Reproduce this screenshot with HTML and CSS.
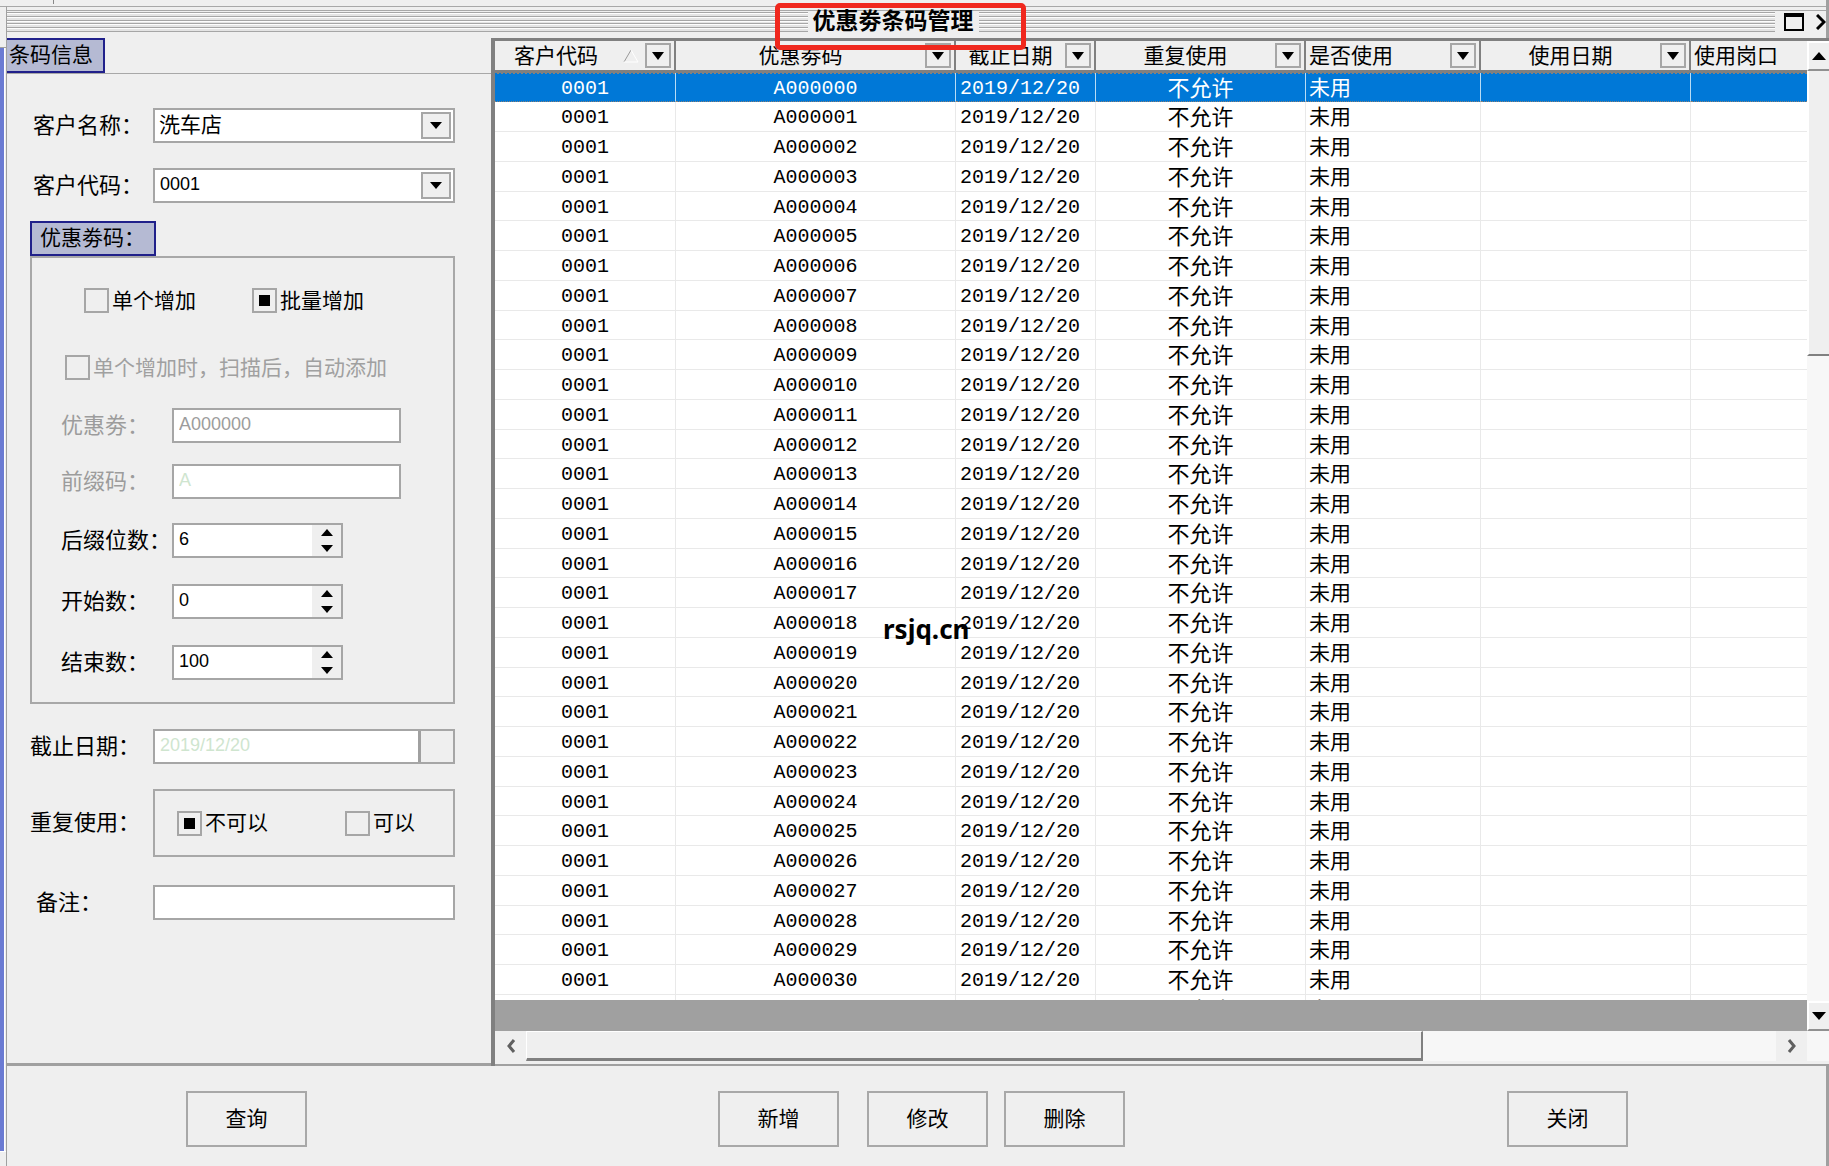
FILE: index.html
```html
<!DOCTYPE html>
<html lang="zh-CN">
<head>
<meta charset="utf-8">
<title>优惠劵条码管理</title>
<link rel="stylesheet" href="styles.css">
</head>
<body>
<div class="topstrip"></div>
<div class="desktop">
  <div class="rail"><div class="rail-head"></div><div class="rail-bar"></div><div class="rail-foot"></div></div>
  <div class="window">
    <header class="titlebar">
      <div class="stripes"><h1 class="title">优惠劵条码管理</h1></div>
      <div class="window-buttons">
        <button type="button" aria-label="最大化"><svg width="20" height="18" viewBox="0 0 20 18"><rect x="1" y="1" width="18" height="16" fill="none" stroke="#000" stroke-width="2"/><path d="M0 2h20" stroke="#000" stroke-width="4"/></svg></button>
        <button type="button" aria-label="关闭窗口"><svg width="10" height="16" viewBox="0 0 10 16"><path d="M1 1l7 7-7 7" fill="none" stroke="#000" stroke-width="3"/></svg></button>
      </div>
    </header>

    <main class="content">
      <form class="panel" id="form">
        <h2 class="tab tab-main">条码信息</h2>
        <div class="panel-body">
          <div class="row row-first">
            <label class="label inset" for="name">客户名称：</label>
            <div class="combo"><select id="name" class="cjk"><option>洗车店</option></select><span class="drop"><svg width="12" height="7" viewBox="0 0 12 7"><path d="M0 0h12L6 7z"/></svg></span></div>
          </div>
          <div class="row">
            <label class="label inset" for="code">客户代码：</label>
            <div class="combo"><select id="code"><option>0001</option></select><span class="drop"><svg width="12" height="7" viewBox="0 0 12 7"><path d="M0 0h12L6 7z"/></svg></span></div>
          </div>

          <h2 class="tab tab-group">优惠劵码：</h2>
          <div class="group">
            <div class="choices">
              <label class="choice"><input type="radio" name="mode">单个增加</label>
              <label class="choice"><input type="radio" name="mode" checked>批量增加</label>
            </div>
            <label class="choice auto-add"><input type="checkbox" disabled>单个增加时，扫描后，自动添加</label>
            <div class="field field-text"><label class="label dim" for="coupon">优惠劵：</label><input class="text dim" id="coupon" value="A000000" disabled></div>
            <div class="field field-text"><label class="label dim" for="prefix">前缀码：</label><input class="text pale" id="prefix" value="A" disabled></div>
            <div class="field"><label class="label" for="digits">后缀位数：</label><div class="spin"><input id="digits" value="6" inputmode="numeric"><span class="steps"><button type="button" aria-label="增加"><svg width="12" height="7" viewBox="0 0 12 7"><path d="M0 7h12L6 0z"/></svg></button><button type="button" aria-label="减少"><svg width="12" height="7" viewBox="0 0 12 7"><path d="M0 0h12L6 7z"/></svg></button></span></div></div>
            <div class="field"><label class="label" for="start">开始数：</label><div class="spin"><input id="start" value="0" inputmode="numeric"><span class="steps"><button type="button" aria-label="增加"><svg width="12" height="7" viewBox="0 0 12 7"><path d="M0 7h12L6 0z"/></svg></button><button type="button" aria-label="减少"><svg width="12" height="7" viewBox="0 0 12 7"><path d="M0 0h12L6 7z"/></svg></button></span></div></div>
            <div class="field"><label class="label" for="end">结束数：</label><div class="spin"><input id="end" value="100" inputmode="numeric"><span class="steps"><button type="button" aria-label="增加"><svg width="12" height="7" viewBox="0 0 12 7"><path d="M0 7h12L6 0z"/></svg></button><button type="button" aria-label="减少"><svg width="12" height="7" viewBox="0 0 12 7"><path d="M0 0h12L6 7z"/></svg></button></span></div></div>
          </div>

          <div class="row">
            <label class="label" for="due">截止日期：</label>
            <div class="date"><input id="due" value="2019/12/20" disabled><button type="button" aria-label="选择日期" disabled></button></div>
          </div>
          <div class="row">
            <span class="label" id="reuse">重复使用：</span>
            <div class="reuse" role="radiogroup" aria-labelledby="reuse">
              <label class="choice"><input type="radio" name="reuse" checked>不可以</label>
              <label class="choice"><input type="radio" name="reuse">可以</label>
            </div>
          </div>
          <div class="row row-note">
            <label class="label note" for="note">备注：</label>
            <input class="text" id="note">
          </div>
        </div>
      </form>

      <section class="grid">
        <div class="grid-main">
          <div class="viewport">
            <table>
              <colgroup><col class="c-client"><col class="c-coupon"><col class="c-due"><col class="c-reuse"><col class="c-state"><col class="c-used"><col></colgroup>
              <thead><tr>
                <th><div class="head"><span>客户代码</span><svg class="sort" width="16" height="14" viewBox="0 0 16 14"><path d="M1 13L8 1" stroke="#999" stroke-width="1" fill="none"/><path d="M8 1l7 12H1" stroke="#fff" stroke-width="1" fill="none"/></svg><button type="button" aria-label="筛选"><svg width="12" height="8" viewBox="0 0 12 8"><path d="M0 0h12L6 8z"/></svg></button></div></th>
                <th><div class="head"><span>优惠劵码</span><button type="button" aria-label="筛选"><svg width="12" height="8" viewBox="0 0 12 8"><path d="M0 0h12L6 8z"/></svg></button></div></th>
                <th><div class="head"><span>截止日期</span><button type="button" aria-label="筛选"><svg width="12" height="8" viewBox="0 0 12 8"><path d="M0 0h12L6 8z"/></svg></button></div></th>
                <th><div class="head"><span>重复使用</span><button type="button" aria-label="筛选"><svg width="12" height="8" viewBox="0 0 12 8"><path d="M0 0h12L6 8z"/></svg></button></div></th>
                <th><div class="head start"><span>是否使用</span><button type="button" aria-label="筛选"><svg width="12" height="8" viewBox="0 0 12 8"><path d="M0 0h12L6 8z"/></svg></button></div></th>
                <th><div class="head"><span>使用日期</span><button type="button" aria-label="筛选"><svg width="12" height="8" viewBox="0 0 12 8"><path d="M0 0h12L6 8z"/></svg></button></div></th>
                <th><div class="head start"><span>使用岗口</span></div></th>
              </tr></thead>
              <tbody id="rows"></tbody>
            </table>
          </div>
          <div class="filler"></div>
        </div>
        <div class="vscroll">
          <button type="button" aria-label="向上滚动"><svg width="14" height="8" viewBox="0 0 14 8"><path d="M0 8h14L7 0z"/></svg></button>
          <div class="vthumb"></div>
          <button class="down" type="button" aria-label="向下滚动"><svg width="14" height="8" viewBox="0 0 14 8"><path d="M0 0h14L7 8z"/></svg></button>
        </div>
        <div class="hscroll">
          <button type="button" aria-label="向左滚动"><svg width="10" height="14" viewBox="0 0 10 14"><path d="M8 1L3 7l5 6" fill="none" stroke="#606060" stroke-width="3"/></svg></button>
          <div class="hthumb"></div>
          <button class="right" type="button" aria-label="向右滚动"><svg width="10" height="14" viewBox="0 0 10 14"><path d="M2 1l5 6-5 6" fill="none" stroke="#606060" stroke-width="3"/></svg></button>
        </div>
      </section>
    </main>

    <footer class="actions">
      <button type="button">查询</button>
      <div class="edit">
        <button type="button">新增</button>
        <button type="button">修改</button>
        <button type="button">删除</button>
      </div>
      <button class="close" type="button">关闭</button>
    </footer>
  </div>
</div>
<div class="watermark">rsjq.cn</div>
<script src="app.js"></script>
</body>
</html>
```

FILE: styles.css
```css
* { box-sizing: border-box; }

body {
  margin: 0;
  height: 100vh;
  overflow: hidden;
  display: flex;
  flex-direction: column;
  background: #efefef;
  color: #000;
  font: 21px/24px "Liberation Sans", "Noto Sans CJK SC", sans-serif;
}

h1, h2 { margin: 0; font-size: 21px; font-weight: 400; white-space: nowrap; }
button, input, select { font: inherit; color: inherit; margin: 0; border-radius: 0; }
button { padding: 0; border: 0; background: #efefef; display: grid; place-items: center; }
svg { display: block; }

.topstrip {
  flex: 0 0 6px;
  border-right: 3px solid #a0a0a0;
  background: linear-gradient(#888, #888) 53px 0 / 1px 4px no-repeat;
}

.desktop { flex: 1; min-height: 0; display: flex; }

/* Edge of the parent window on the far left */
.rail { flex: 0 0 7px; display: flex; flex-direction: column; border-top: 1px solid #a8a8a8; border-right: 1px solid #a0a0a0; }
.rail-head { height: 41px; border-bottom: 1px solid #a0a0a0; }
.rail-bar { flex: 1; border-right: 1px solid #efefef; background: linear-gradient(90deg, #6b7bd3 4px, #fff 4px); }
.rail-foot { height: 15px; border-top: 1px solid #fff; }

.window { flex: 1; min-width: 0; display: flex; flex-direction: column; }

.titlebar {
  flex: 0 0 32px;
  display: flex;
  border-right: 3px solid #a0a0a0;
  background:
    linear-gradient(#a8a8a8, #a8a8a8) 0 0 / 100% 1px no-repeat,
    linear-gradient(#a8a8a8, #a8a8a8) 0 4px / 100% 1px no-repeat;
}
.stripes {
  flex: 1;
  display: flex;
  justify-content: center;
  align-items: flex-start;
  padding: 5px 0 0 4px;
  background:
    linear-gradient(
      #a6a6a6 1px, #fdfdfd 1px 2px, #e4e4e4 2px 4px,
      #a6a6a6 4px 5px, #fdfdfd 5px 6px, #e4e4e4 6px 8px,
      #a6a6a6 8px 9px, #fdfdfd 9px 10px, #e4e4e4 10px 11px,
      #a6a6a6 11px 12px, #fdfdfd 12px 13px, #e4e4e4 13px 15px,
      #a6a6a6 15px 16px, #fdfdfd 16px 17px, #e4e4e4 17px 19px,
      #a6a6a6 19px 20px) 0 6px / 100% 20px no-repeat;
}
.title {
  position: relative;
  height: 22px;
  padding: 0 5px;
  background: #efefef;
  font-size: 23px;
  line-height: 20px;
  font-weight: 700;
}
.title::after {
  content: "";
  position: absolute;
  z-index: 2;
  inset: -8px -47px -17px -33px;
  border: 5px solid #f0281e;
  border-radius: 5px;
}
.window-buttons { flex: 0 0 51px; display: flex; align-items: center; justify-content: flex-end; gap: 12px; }
.window-buttons button { background: none; }

.content { flex: 1; min-height: 0; display: flex; }

.panel { flex: 0 0 484px; display: flex; flex-direction: column; align-items: flex-start; border-bottom: 3px solid #a0a0a0; }
.tab { border: 2px solid #20208a; background: #b5bad3; line-height: 30px; height: 35px; }
.tab-main { width: 98px; padding-left: 2px; border-left: 0; }
.tab-group { width: 126px; padding-left: 8px; margin-top: -7px; }
.panel-body {
  align-self: stretch;
  flex: 1;
  display: flex;
  flex-direction: column;
  gap: 25px;
  padding: 34px 36px 0 23px;
  border-top: 1px solid #a8a8a8;
}
.row { display: grid; grid-template-columns: 123px 1fr; align-items: center; }
.label { font-size: 22px; white-space: nowrap; }
.inset { padding-left: 3px; }
.note { padding-left: 6px; }
.dim { color: #9c9c9c; }

.combo, .spin, .date, .text { height: 35px; border: 2px solid #a6a6a6; background: #fff; }
.combo, .spin, .date { display: flex; }
.combo select, .spin input, .date input {
  flex: 1;
  min-width: 0;
  appearance: none;
  border: 0;
  padding: 0 5px 3px;
  background: none;
  font-size: 18px;
  outline: 0;
}
.combo .cjk { font-size: 21px; padding: 0 4px 2px; }
.drop { width: 30px; margin: 2px; border: 2px solid #a6a6a6; background: #efefef; display: grid; place-items: center; }
.text { width: 100%; padding: 0 5px 3px; font-size: 18px; outline: 0; }
.text.pale, .date input { color: #cfe5cf; }

.group { display: flex; flex-direction: column; margin-top: -25px; height: 448px; border: 2px solid #a8a8a8; padding: 30px 0 0 29px; }
.choices { display: grid; grid-template-columns: 168px 1fr; padding-left: 23px; }
.choice { display: flex; align-items: center; gap: 3px; white-space: nowrap; }
.choice input { appearance: none; width: 25px; height: 25px; border: 2px solid #a6a6a6; background: #efefef; }
.choice input:checked { background: linear-gradient(#000, #000) center / 11px 11px no-repeat #efefef; }
.auto-add { margin: 42px 0 28px 4px; color: #a0a0a0; }
.field { display: grid; grid-template-columns: 111px 171px; align-items: center; margin-bottom: 26px; }
.field-text { grid-template-columns: 111px 229px; margin-bottom: 21px; }
.field-text + .field:not(.field-text) { margin-top: 3px; }
.spin input { padding-right: 0; }
.steps { width: 29px; background: #efefef; display: grid; grid-template-rows: 1fr 1fr; justify-items: center; }

.date input { border-right: 3px solid #a0a0a0; }
.date button { width: 32px; }
.reuse { display: grid; grid-template-columns: 168px 1fr; align-items: center; height: 68px; padding-left: 22px; border: 2px solid #a8a8a8; }
.row-note { margin-top: 3px; }

.grid {
  flex: 1;
  min-width: 0;
  display: grid;
  grid-template-columns: 1fr 22px;
  grid-template-rows: 1fr 35px;
  border-top: 3px solid #808080;
  border-left: 4px solid #808080;
}
.grid-main { min-width: 0; min-height: 0; display: flex; flex-direction: column; }
.viewport { flex: 1; min-height: 0; overflow: hidden; background: #fff; }
.filler { flex: 0 0 31px; background: #a0a0a0; }

table { width: 100%; table-layout: fixed; border-collapse: separate; border-spacing: 0; }
.c-client { width: 181px; }
.c-coupon { width: 280px; }
.c-due { width: 140px; }
.c-reuse { width: 210px; }
.c-state { width: 175px; }
.c-used { width: 210px; }
th, td { padding: 0; white-space: nowrap; }
th { height: 32px; font-weight: 400; background: #efefef; border-right: 2px solid #808080; border-bottom: 3px solid #808080; }
th:last-child { border-right: 0; }
.head { display: flex; align-items: center; height: 29px; padding-right: 3px; }
.head > span { flex: 1; text-align: center; line-height: 26px; }
.head.start > span { text-align: left; padding-left: 3px; }
.head button { width: 26px; height: 25px; border: 2px solid #a6a6a6; }
.sort { margin: 0 6px; }

td {
  height: 30px;
  padding-top: 3px;
  border-right: 1px solid #e9e9e9;
  border-bottom: 1px solid #e9e9e9;
  text-align: center;
  font: 20px/24px "Liberation Mono", monospace;
}
tr:nth-child(4n+1) td { height: 29px; }
td.reusable, td.state { padding-top: 0; padding-bottom: 3px; font: 22px/24px "Noto Sans CJK SC", sans-serif; }
td.date-cell { text-align: left; padding-left: 4px; }
td.state { text-align: left; padding-left: 3px; font-size: 21px; }
td:last-child { border-right: 0; }
.selected td {
  background: linear-gradient(90deg, #0078d7 50%, #8b8178 50%) 0 0 / 4px 1px repeat-x #0078d7;
  color: #fff;
  border-right-color: #b8dcf5;
  border-bottom: 1px dotted #8b8178;
}

.vscroll { display: flex; flex-direction: column; background: #f7f7f7; overflow: hidden; }
.vscroll button { flex: 0 0 30px; border-top: 2px solid #fff; border-left: 2px solid #fff; border-bottom: 2px solid #909090; }
.vthumb { height: 285px; background: #efefef; border-left: 2px solid #fff; border-bottom: 2px solid #808080; }
.vscroll .down { margin-top: auto; }

.hscroll { grid-column: 1 / -1; display: flex; height: 35px; padding-right: 22px; background: #f7f7f7; border-bottom: 2px solid #a0a0a0; box-shadow: inset 0 -3px #efefef; }
.hscroll button { flex: 0 0 31px; height: 30px; }
.hthumb { flex: 0 0 calc(70% - 21px); height: 30px; background: #efefef; border: 1px solid #fff; border-right: 2px solid #808080; border-bottom: 3px solid #808080; }
.hscroll .right { margin-left: auto; }

.actions { flex: 0 0 100px; display: flex; align-items: flex-start; padding: 25px 198px 0 179px; border-right: 3px solid #a0a0a0; }
.actions button { width: 121px; height: 56px; border: 2px solid #a8a8a8; }
.edit { display: flex; gap: 16px; margin-left: 411px; }
.edit button:first-child { margin-right: 12px; }
.actions .close { margin-left: auto; }

.watermark { position: absolute; left: 883px; top: 613px; z-index: 3; font: 700 26px/32px "Noto Sans", sans-serif; }
```

FILE: app.js
```js
// Fill the coupon list with consecutive codes.
const body = document.getElementById("rows");
for (let i = 0; i <= 31; i++) {
  const row = body.insertRow();
  if (i === 0) row.className = "selected";
  const cells = [
    ["0001", ""],
    ["A" + String(i).padStart(6, "0"), ""],
    ["2019/12/20", "date-cell"],
    ["不允许", "reusable"],
    ["未用", "state"],
    ["", ""],
    ["", ""]
  ];
  for (const [text, name] of cells) {
    const cell = row.insertCell();
    cell.textContent = text;
    if (name) cell.className = name;
  }
}
```
